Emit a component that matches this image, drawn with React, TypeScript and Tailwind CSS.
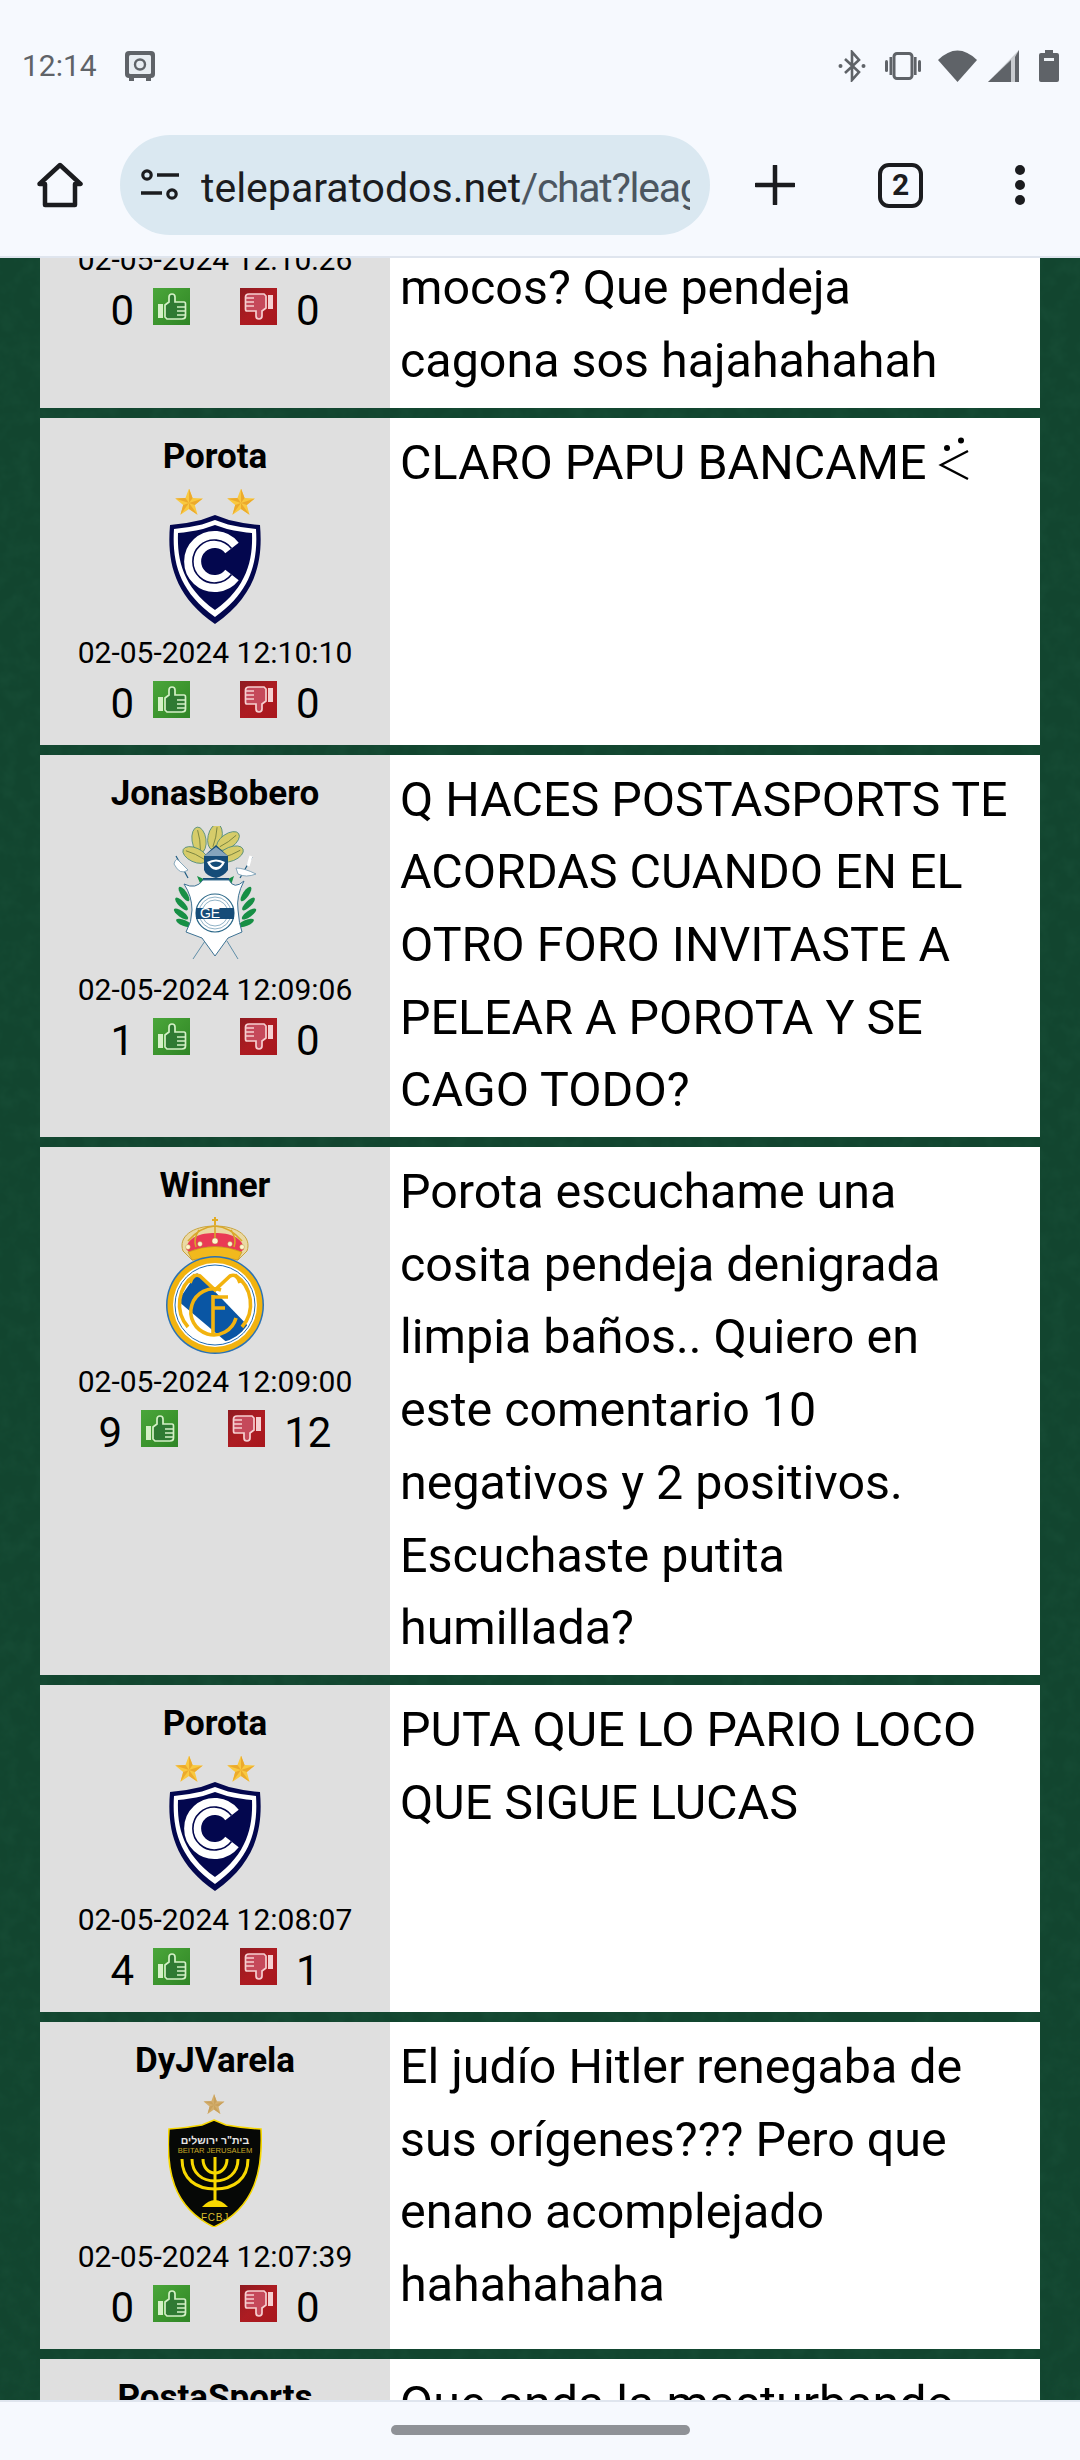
import React from "react";

const StarShape = ({ cx, cy, r, a, b }: { cx: number; cy: number; r: number; a: string; b: string }) => {
  const pts: [number, number][] = [];
  for (let i = 0; i < 10; i++) {
    const rad = i % 2 === 0 ? r : r * 0.42;
    const t = -Math.PI / 2 + (i * Math.PI) / 5;
    pts.push([cx + rad * Math.cos(t), cy + rad * Math.sin(t)]);
  }
  return (
    <g>
      <polygon points={pts.map((p) => p.join(",")).join(" ")} fill={a} />
      {[0, 2, 4, 6, 8].map((i) => (
        <polygon key={i} points={`${cx},${cy} ${pts[i][0]},${pts[i][1]} ${pts[(i + 1) % 10][0]},${pts[(i + 1) % 10][1]}`} fill={b} />
      ))}
    </g>
  );
};

const Cienciano = () => (
  <svg width="92" height="135" viewBox="0 0 92 135">
    <StarShape cx={20} cy={14} r={14.5} a="#f9c940" b="#ecaa2c" />
    <StarShape cx={72} cy={14} r={14.5} a="#f9c940" b="#ecaa2c" />
    <g transform="translate(0,26)">
      <path d="M46 0 L60 5 Q76 9 91 10 C94 45 88 80 46 109 C4 80 -2 45 1 10 Q16 9 32 5 Z" fill="#03074e" />
      <path d="M46 5 L59 9.5 Q74 13 87 14 C89 45 83 76 46 102 C9 76 3 45 5 14 Q18 13 33 9.5 Z" fill="#ffffff" />
      <path d="M46 10 L58 14 Q72 17 83 18 C84 45 78 72 46 95 C14 72 8 45 9 18 Q20 17 34 14 Z" fill="#03074e" />
      <path d="M63 33 A22 22 0 1 0 63 60" fill="none" stroke="#fff" strokeWidth="17" />
      <path d="M62.5 33.5 A21.5 21.5 0 1 0 62.5 59.5" fill="none" stroke="#03074e" strokeWidth="1.6" />
    </g>
  </svg>
);

const Feather = ({ x, y, rot }: { x: number; y: number; rot: number }) => (
  <g transform={`translate(${x},${y}) rotate(${rot})`}>
    <ellipse cx="0" cy="0" rx="7" ry="13" fill="#d6cc6a" stroke="#4f8a7a" strokeWidth="0.8" />
    <path d="M0 -10 Q1.5 0 0 10" stroke="#6f7b3a" strokeWidth="0.8" fill="none" />
  </g>
);

const Leaves = () => (
  <g fill="#178f45">
    <ellipse cx="12" cy="68" rx="3" ry="8.5" transform="rotate(-35 12 68)" />
    <ellipse cx="9.5" cy="78" rx="3" ry="8.5" transform="rotate(-45 9.5 78)" />
    <ellipse cx="9" cy="88" rx="3" ry="8.5" transform="rotate(-55 9 88)" />
    <ellipse cx="12" cy="97" rx="3" ry="8.5" transform="rotate(-68 12 97)" />
  </g>
);

const Gimnasia = () => (
  <svg width="86" height="134" viewBox="0 0 86 134">
    <Feather x={27} y={14} rot={-8} />
    <Feather x={43} y={11} rot={12} />
    <Feather x={56} y={15} rot={55} />
    <Feather x={23} y={29} rot={-65} />
    <Feather x={59} y={28} rot={68} />
    <path d="M44 19 L56 30 L56 44 Q52 50 44 52 Q34 50 32 44 L32 30 Z" fill="#154c78" />
    <path d="M35 36 Q44 31 53 36 Q50 43 44 44 Q38 43 35 36 Z" fill="#fff" />
    <path d="M38 37 Q44 34 50 37 Q48 41 44 41 Q40 41 38 37 Z" fill="#154c78" />
    <path d="M32 30 L56 30 L44 21 Z" fill="#cfe0ea" opacity="0.6" />
    <path d="M4 30 L16 52" stroke="#1c5a80" strokeWidth="1.2" />
    <path d="M2 38 Q4 30 8 36 L16 44 Q8 50 2 38 Z" fill="#fff" stroke="#6e97ae" strokeWidth="0.8" />
    <path d="M80 31 L68 52" stroke="#1c5a80" strokeWidth="1.2" />
    <path d="M64 42 Q72 42 84 48 Q74 52 66 48 Z" fill="#fff" stroke="#6e97ae" strokeWidth="0.8" />
    <path d="M79 30 L76 40" stroke="#fff" strokeWidth="3" />
    <path d="M25 50 L30 62 H58 L62 50 L52 55 H36 Z" fill="#178f45" />
    <rect x="31" y="52" width="26" height="9" fill="#154c78" />
    <Leaves />
    <g transform="translate(86,0) scale(-1,1)"><Leaves /></g>
    <path d="M33 115 L21 133" stroke="#5f8ea8" strokeWidth="1" />
    <path d="M55 115 L66 133" stroke="#5f8ea8" strokeWidth="1" />
    <path d="M12 58 Q24 64 31 54 H57 Q62 64 72 55 Q64 70 66 84 Q67 98 70 106 L56 112 L43 130 L30 112 L14 106 Q20 96 20 84 Q20 70 12 58 Z" fill="#fff" stroke="#3e7394" strokeWidth="1" />
    <circle cx="43" cy="87" r="19" fill="#fff" stroke="#2a6788" strokeWidth="1.2" />
    <circle cx="43" cy="87" r="16" fill="none" stroke="#8fb2c6" strokeWidth="1" />
    <circle cx="43" cy="87" r="13" fill="none" stroke="#8fb2c6" strokeWidth="1" />
    <rect x="24" y="82" width="38" height="11" fill="#154c78" />
    <text x="38" y="92" textAnchor="middle" fontFamily="Liberation Sans" fontSize="14" fill="#fff">GE</text>
  </svg>
);

const RealMadrid = () => (
  <svg width="98" height="137" viewBox="0 0 98 137">
    <path d="M49 0 L49 8" stroke="#e3ac25" strokeWidth="2" />
    <path d="M46 3 H52" stroke="#e3ac25" strokeWidth="2" />
    <path d="M17 34 C12 20 26 9 49 9 C72 9 86 20 81 34 L72 43 H26 Z" fill="#ead9a4" stroke="#c9a43c" strokeWidth="1" />
    <path d="M20 32 C22 20 34 16 49 16 C64 16 76 20 78 32 L70 40 H28 Z" fill="#ea3a55" />
    <path d="M22 24 Q34 10 49 9 Q64 10 76 24 M49 9 V24 M33 13 Q27 22 30 30 M65 13 Q71 22 68 30" stroke="#d9a72a" strokeWidth="1.6" fill="none" />
    <path d="M22 35 Q49 24 76 35 L72 43 Q49 37 26 43 Z" fill="#f2b91d" stroke="#b98f22" strokeWidth="0.6" />
    <g fill="#fff6d0" stroke="#a98a2c" strokeWidth="0.4">
      <circle cx="49" cy="24" r="3" /><circle cx="34" cy="27" r="2.4" /><circle cx="64" cy="27" r="2.4" /><circle cx="22" cy="30" r="2.4" /><circle cx="76" cy="30" r="2.4" />
    </g>
    <circle cx="49" cy="88" r="49" fill="#2a72b5" />
    <circle cx="49" cy="88" r="47.5" fill="#f2b30f" />
    <circle cx="49" cy="88" r="42" fill="#fff" />
    <circle cx="49" cy="88" r="40" fill="none" stroke="#1f6ab0" strokeWidth="1" />
    <clipPath id="rmc"><circle cx="49" cy="88" r="38" /></clipPath>
    <path d="M31 56 L85 112 L64 128 L12 84 Z" fill="#0a56a4" clipPath="url(#rmc)" />
    <g fill="none" stroke="#f2b30f" strokeWidth="3.6">
      <path d="M29 58 A35 35 0 0 0 22 110" />
      <path d="M69 58 A35 35 0 0 1 76 110" />
      <path d="M24 66 Q27 56 34 59 L49 73 L64 59 Q71 56 74 66" />
      <path d="M55 73 A23 23 0 1 0 70 101" />
      <path d="M47 80 H62 M47 91 H59" />
      <path d="M47 78 V118" />
    </g>
  </svg>
);

const Beitar = () => (
  <svg width="94" height="133" viewBox="0 0 94 133">
    <StarShape cx={46} cy={11} r={11} a="#d3ae6c" b="#c9a15c" />
    <g transform="translate(0,25)">
      <path d="M46 1 L58 6 Q74 9 93 10 C95 50 88 88 46 108 C4 88 -2 50 1 10 Q18 9 34 6 Z" fill="#060806" stroke="#f8d800" strokeWidth="1.6" />
      <text x="47" y="25" textAnchor="middle" fontFamily="Liberation Sans, DejaVu Sans" fontSize="10.5" fontWeight="700" fill="#e6e6e6" direction="rtl">בית"ר ירושלים</text>
      <text x="47" y="34" textAnchor="middle" fontFamily="Liberation Sans" fontSize="7.6" fill="#c8a928">BEITAR JERUSALEM</text>
      <g fill="none" stroke="#f8d800" strokeWidth="3">
        <path d="M14 40 C14 60 28 70 47 70 C66 70 80 60 80 40" />
        <path d="M24 40 C24 54 34 62 47 62 C60 62 70 54 70 40" />
        <path d="M35 40 C35 48 40 54 47 54 C54 54 59 48 59 40" />
        <path d="M47 38 V88" />
      </g>
      <path d="M34 88 Q47 74 60 88 Z" fill="#f8d800" />
      <text x="47" y="102" textAnchor="middle" fontFamily="Liberation Sans" fontSize="10" letterSpacing="0.8" fill="#d9bc2c">FCBJ</text>
    </g>
  </svg>
);

const Thumb = ({ up }: { up: boolean }) => {
  const pale = up ? "#d4f0c6" : "#f6cfd0";
  const inner = up ? "#2f7a33" : "#c5495a";
  return (
    <svg width="37" height="37" viewBox="0 0 37 37" className="shrink-0 block">
      <defs>
        <linearGradient id={up ? "tu" : "td"} x1="0" y1="0" x2="1" y2="1">
          <stop offset="0" stopColor={up ? "#4aa63a" : "#8f1a20"} />
          <stop offset="0.5" stopColor={up ? "#3d962f" : "#ad1c22"} />
          <stop offset="1" stopColor={up ? "#2f8526" : "#a8161c"} />
        </linearGradient>
      </defs>
      <rect width="37" height="37" fill={`url(#${up ? "tu" : "td"})`} />
      <g transform={up ? "" : "rotate(180 18.5 18.5) translate(-1,0)"} style={{ filter: "blur(0.4px)" }}>
        <rect x="5" y="16" width="5" height="14" fill={pale} />
        <path d="M12 17 L16 14 L16 9 Q16 6 19 6 Q22 6 22 9 L22 14 L31 14 Q32.5 14 32.5 16 L32.5 28 Q32.5 31 29 31 L14 31 L12 29 Z" fill={inner} stroke={pale} strokeWidth="1.7" />
        <path d="M24 19 H32 M24 23 H32 M24 27 H32" stroke={pale} strokeWidth="1.5" />
      </g>
    </svg>
  );
};

const Votes = ({ up, down }: { up: number; down: number }) => (
  <div className="flex items-start justify-center h-[44px]">
    <span className="text-[42px] leading-[46px] text-black">{up}</span>
    <span className="ml-[19px]"><Thumb up /></span>
    <span className="ml-[50px]"><Thumb up={false} /></span>
    <span className="ml-[19px] text-[42px] leading-[46px] text-black">{down}</span>
  </div>
);

type Post = { name: string; crest: React.ReactNode; date: string; up: number; down: number; text: React.ReactNode };

const Row = ({ name, crest, date, up, down, text }: Post) => (
  <div className="flex min-h-[327px]">
    <div className="w-[350px] shrink-0 bg-[#dfdfdf] flex flex-col items-center pt-[18px] pb-[20px]">
      <div className="text-[35px] leading-[42px] font-bold text-black h-[42px]">{name}</div>
      <div className="h-[157px] flex items-center justify-center">{crest}</div>
      <div className="text-[30px] leading-[36px] text-black">{date}</div>
      <div className="mt-[10px] w-full"><Votes up={up} down={down} /></div>
    </div>
    <div className="flex-1 bg-white pl-[10px] pr-[28px] pt-[9px] pb-[10px] text-[48.4px] leading-[72.7px] text-black">{text}</div>
  </div>
);

const Squiggle = () => (
  <svg width="32" height="44" viewBox="0 0 32 44" className="inline-block align-[-2px] ml-[12px]">
    <path d="M30 14 L3 28 L30 42" fill="none" stroke="#000" strokeWidth="2.4" />
    <circle cx="9" cy="11" r="3" fill="#000" />
    <circle cx="23" cy="3.5" r="3" fill="#000" />
  </svg>
);

const posts: Post[] = [
  { name: "Porota", crest: <Cienciano />, date: "02-05-2024 12:10:10", up: 0, down: 0, text: <>CLARO PAPU BANCAME<Squiggle /></> },
  { name: "JonasBobero", crest: <Gimnasia />, date: "02-05-2024 12:09:06", up: 1, down: 0, text: "Q HACES POSTASPORTS TE ACORDAS CUANDO EN EL OTRO FORO INVITASTE A PELEAR A POROTA Y SE CAGO TODO?" },
  { name: "Winner", crest: <RealMadrid />, date: "02-05-2024 12:09:00", up: 9, down: 12, text: "Porota escuchame una cosita pendeja denigrada limpia baños.. Quiero en este comentario 10 negativos y 2 positivos. Escuchaste putita humillada?" },
  { name: "Porota", crest: <Cienciano />, date: "02-05-2024 12:08:07", up: 4, down: 1, text: "PUTA QUE LO PARIO LOCO QUE SIGUE LUCAS" },
  { name: "DyJVarela", crest: <Beitar />, date: "02-05-2024 12:07:39", up: 0, down: 0, text: "El judío Hitler renegaba de sus orígenes??? Pero que enano acomplejado hahahahaha" },
  { name: "PostaSports", crest: null, date: "", up: 0, down: 0, text: "Que anda la masturbando" },
];

const gray = "#5f6368";

const StatusBar = () => (
  <div className="h-[135px] flex items-start justify-between pl-[22px] pr-[21px] pt-[50px]">
    <div className="flex items-center gap-[28px] h-[32px]">
      <span className="text-[30px] leading-[32px] text-[#5f6368]">12:14</span>
      <svg width="30" height="30" viewBox="0 0 30 30">
        <rect x="0" y="0" width="30" height="27" rx="4" fill={gray} />
        <rect x="4" y="27" width="5" height="3" fill={gray} />
        <rect x="21" y="27" width="5" height="3" fill={gray} />
        <rect x="4" y="4" width="22" height="19" rx="1.5" fill="#e8edf2" />
        <circle cx="15" cy="13.5" r="5" fill="none" stroke={gray} strokeWidth="2.4" />
      </svg>
    </div>
    <div className="flex items-center h-[32px]">
      <svg width="28" height="32" viewBox="0 0 28 32" className="mr-[19px]">
        <path d="M7 9 L21 22 L14 30 V2 L21 10 L7 23" fill="none" stroke={gray} strokeWidth="2.6" />
        <circle cx="2.5" cy="16" r="2" fill={gray} /><circle cx="25.5" cy="16" r="2" fill={gray} />
      </svg>
      <svg width="36" height="28" viewBox="0 0 36 28" className="mr-[17px]">
        <rect x="9" y="1.5" width="18" height="25" rx="3" fill="none" stroke={gray} strokeWidth="3" />
        <rect x="0" y="8" width="3" height="12" rx="1.5" fill={gray} />
        <rect x="4.5" y="5" width="2.6" height="18" fill={gray} />
        <rect x="33" y="8" width="3" height="12" rx="1.5" fill={gray} />
        <rect x="29" y="5" width="2.6" height="18" fill={gray} />
      </svg>
      <svg width="39" height="32" viewBox="0 0 39 32" className="mr-[11px]">
        <path d="M0 10 Q19.5 -9 39 10 L19.5 32 Z" fill={gray} />
      </svg>
      <svg width="31" height="32" viewBox="0 0 31 32" className="mr-[20px]">
        <path d="M31 0 V32 H0 Z" fill="#c8cbcf" />
        <path d="M31 0 V32 H27 V7 Z" fill={gray} />
        <path d="M23 10 V32 H0 Z" fill={gray} />
      </svg>
      <svg width="20" height="32" viewBox="0 0 20 32">
        <path d="M6 0 H14 V3 H18 Q20 3 20 5 V30 Q20 32 18 32 H2 Q0 32 0 30 V5 Q0 3 2 3 H6 Z" fill={gray} />
        <rect x="5" y="8" width="10" height="3" fill="#eef2f6" />
      </svg>
    </div>
  </div>
);

const Toolbar = () => (
  <div className="h-[121px] flex items-start relative">
    <div className="w-[120px] h-[100px] flex items-center justify-center">
      <svg width="46" height="46" viewBox="0 0 46 46">
        <path d="M8 43 V22 H2.5 L23 3 L43.5 22 H38 V43 Z" fill="none" stroke="#1b1c1f" strokeWidth="4.5" strokeLinejoin="round" />
      </svg>
    </div>
    <div className="w-[590px] h-[100px] rounded-full bg-[#dae8f1] flex items-center pl-[21px] pr-[20px] overflow-hidden">
      <svg width="38" height="32" viewBox="0 0 38 32" className="shrink-0">
        <circle cx="6" cy="6" r="4.2" fill="none" stroke="#1b1c1f" strokeWidth="3.2" />
        <path d="M16 6 H38 M0 24 H21" stroke="#1b1c1f" strokeWidth="3.6" />
        <circle cx="31" cy="25" r="4.2" fill="none" stroke="#1b1c1f" strokeWidth="3.2" />
      </svg>
      <div className="ml-[22px] w-[489px] overflow-hidden whitespace-nowrap text-[41px] leading-[50px] pt-[5px] text-[#1b1c1f]">
        teleparatodos.net<span className="text-[#4c5660] tracking-[-1.3px]">/chat?league=1</span>
      </div>
    </div>
    <div className="flex-1 h-[100px] flex items-center pl-[45px]">
      <svg width="40" height="40" viewBox="0 0 40 40" className="shrink-0">
        <path d="M20 1 V39 M1 20 H39" stroke="#1b1c1f" strokeWidth="4.5" strokeLinecap="round" />
      </svg>
      <div className="ml-[83px] w-[45px] h-[45px] shrink-0 rounded-[11px] border-[4.5px] border-[#1b1c1f] flex items-center justify-center text-[30px] font-bold text-[#1b1c1f] leading-none">2</div>
      <svg width="12" height="42" viewBox="0 0 12 42" className="ml-[91px] shrink-0">
        <circle cx="6" cy="6" r="5" fill="#1b1c1f" /><circle cx="6" cy="21" r="5" fill="#1b1c1f" /><circle cx="6" cy="36" r="5" fill="#1b1c1f" />
      </svg>
    </div>
  </div>
);

export default function App() {
  return (
    <div className="w-[1080px] h-[2460px] flex flex-col overflow-hidden bg-[#f6f9fe] font-[Roboto,sans-serif]">
      <header className="h-[258px] shrink-0 bg-[#f6f9fe] border-b-2 border-[#dfe5ee]">
        <StatusBar />
        <Toolbar />
      </header>
      <main className="flex-1 min-h-0 overflow-hidden bg-[#12452f] relative">
        <svg className="absolute inset-0 w-full h-full opacity-10">
          <filter id="grain">
            <feTurbulence type="fractalNoise" baseFrequency="0.06" numOctaves="3" seed="4" />
            <feColorMatrix values="0 0 0 0 0.08  0 0 0 0 0.36  0 0 0 0 0.22  0 0 0 1.2 -0.45" />
          </filter>
          <rect width="100%" height="100%" filter="url(#grain)" />
        </svg>
        <div className="relative px-[40px] mt-[-233px] flex flex-col gap-[10px]">
          <Row
            name={"\u00a0"}
            crest={null}
            date="02-05-2024 12:10:26"
            up={0}
            down={0}
            text={<><div>&nbsp;</div><div>&nbsp;</div><div>&nbsp;</div>mocos? Que pendeja cagona sos hajahahahah</>}
          />
          {posts.map((p, i) => <Row key={i} {...p} />)}
        </div>
      </main>
      <footer className="h-[60px] shrink-0 bg-[#f6f9fe] border-t-2 border-[#dfe5ee] flex justify-center pt-[23px]">
        <div className="w-[299px] h-[10px] rounded-full bg-[#8f9297]" />
      </footer>
    </div>
  );
}
